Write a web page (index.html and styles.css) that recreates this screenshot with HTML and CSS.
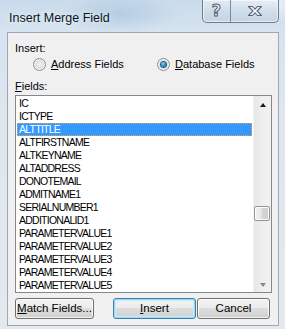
FILE: index.html
```html
<!DOCTYPE html>
<html>
<head>
<meta charset="utf-8">
<link rel="stylesheet" href="styles.css">
</head>
<body>
<div class="window">
  <div class="titlebar">
    <span class="title">Insert Merge Field</span>
    <div class="caption-btns">
      <div class="cbtn help">?</div>
      <div class="cbtn close">
        <svg width="16" height="12" viewBox="0 0 16 12">
          <path d="M1.5 1.5 H5.5 L8 4.2 L10.5 1.5 H14.5 L10 6 L14.5 10.5 H10.5 L8 7.8 L5.5 10.5 H1.5 L6 6 Z" fill="#f7f9fb" stroke="#5b6775" stroke-width="1.1" stroke-linejoin="round"/>
        </svg>
      </div>
    </div>
  </div>
  <div class="frame-body">
    <div class="client">
      <div class="lbl first">Insert:</div>
      <div class="radios">
        <label class="opt opt-address"><span class="radio"></span><span><u>A</u>ddress Fields</span></label>
        <label class="opt"><span class="radio checked"></span><span><u>D</u>atabase Fields</span></label>
      </div>
      <div class="lbl fields"><u>F</u>ields:</div>
      <div class="listbox">
        <ul class="items">
          <li>IC</li>
          <li>ICTYPE</li>
          <li class="sel">ALTTITLE</li>
          <li>ALTFIRSTNAME</li>
          <li>ALTKEYNAME</li>
          <li>ALTADDRESS</li>
          <li>DONOTEMAIL</li>
          <li>ADMITNAME1</li>
          <li>SERIALNUMBER1</li>
          <li>ADDITIONALID1</li>
          <li>PARAMETERVALUE1</li>
          <li>PARAMETERVALUE2</li>
          <li>PARAMETERVALUE3</li>
          <li>PARAMETERVALUE4</li>
          <li>PARAMETERVALUE5</li>
        </ul>
        <div class="vscroll">
          <div class="sbtn"><span class="arrow up"></span></div>
          <div class="track"><div class="thumb"></div></div>
          <div class="sbtn"><span class="arrow down"></span></div>
        </div>
      </div>
      <div class="buttons">
        <div class="btn match"><u>M</u>atch Fields...</div>
        <div class="btn insert default"><u>I</u>nsert</div>
        <div class="btn cancel">Cancel</div>
      </div>
    </div>
  </div>
</div>
</body>
</html>
```

FILE: styles.css
```css
html, body {
  margin: 0;
  padding: 0;
}
body {
  background: #dce5ee;
  font-family: "Liberation Sans", Arial, sans-serif;
  color: #000;
}
.window {
  width: 285px;
  height: 329px;
  display: flex;
  flex-direction: column;
  background:
    radial-gradient(ellipse 60px 20px at 120px 14px, rgba(150,185,215,0.45), rgba(150,185,215,0) 100%),
    radial-gradient(ellipse 40px 18px at 270px 4px, rgba(255,255,255,0.7), rgba(255,255,255,0) 100%),
    linear-gradient(180deg, #cadbeb 0px, #d6e3f0 32px, #dfe6ee 120px, #e4e9ee 329px);
  overflow: hidden;
}
.titlebar {
  height: 32px;
  flex: none;
  display: flex;
  align-items: flex-start;
}
.title {
  font-size: 12.5px;
  line-height: 15px;
  padding: 11px 0 0 9px;
  color: #0b1622;
  text-shadow: 0 0 6px rgba(255,255,255,0.9);
}
.caption-btns {
  margin-left: auto;
  margin-right: 6px;
  display: flex;
  height: 23px;
  border: 1px solid #6e7d8e;
  border-top: none;
  border-radius: 0 0 5px 5px;
  overflow: hidden;
  box-sizing: border-box;
  background: linear-gradient(180deg, rgba(230,238,246,0.85) 0%, rgba(206,220,234,0.85) 50%, rgba(196,212,228,0.9) 100%);
  box-shadow: inset 0 0 0 1px rgba(255,255,255,0.55);
}
.cbtn {
  display: flex;
  align-items: center;
  justify-content: center;
  height: 100%;
}
.help {
  width: 28px;
  border-right: 1px solid #7d8b9b;
  font-family: "DejaVu Sans", sans-serif;
  font-weight: bold;
  font-size: 16px;
  color: #f3f6f9;
  -webkit-text-stroke: 1px #56626f;
  padding-bottom: 1px;
  box-sizing: border-box;
}
.close {
  width: 47px;
}
.close svg {
  display: block;
}
.frame-body {
  flex: 1;
  padding: 0 6px 0 7px;
}
.client {
  box-sizing: border-box;
  width: 272px;
  height: 294px;
  border: 1px solid #9ea8b4;
  background: #f0f0f0;
  padding: 8px 6px 0 7px;
  font-size: 11px;
}
.lbl {
  line-height: 15px;
  height: 15px;
}
.fields {
  margin-top: 7px;
}
.radios {
  margin-top: 1px;
  height: 15px;
  display: flex;
  align-items: center;
  padding-left: 18px;
}
.opt {
  display: flex;
  align-items: center;
  line-height: 15px;
}
.opt-address {
  width: 124px;
}
.radio {
  width: 13px;
  height: 13px;
  box-sizing: border-box;
  border-radius: 50%;
  border: 1px solid #8e8f8f;
  background: radial-gradient(circle at 50% 50%, #f4f4f4 0, #dcdcdc 55%, #c8c8c8 100%);
  box-shadow: inset 0 0 0 1px #f6f6f6;
  margin-right: 5px;
  flex: none;
  display: flex;
  align-items: center;
  justify-content: center;
}
.radio.checked::after {
  content: "";
  width: 5px;
  height: 5px;
  border-radius: 50%;
  background: radial-gradient(circle at 40% 35%, #8fd6ff 0, #2a8fd0 45%, #0d4f86 100%);
  box-shadow: 0 0 0 1px #1f5f8f;
}
.listbox {
  margin-top: 1px;
  width: 257px;
  height: 198px;
  box-sizing: border-box;
  border: 1px solid #828790;
  background: #fff;
  display: flex;
}
.items {
  list-style: none;
  margin: 0;
  padding: 1px 1px 0 1px;
  flex: 1;
  min-width: 0;
}
.items li {
  height: 13px;
  line-height: 13px;
  padding-left: 2px;
  font-size: 10.5px;
  letter-spacing: -0.75px;
  white-space: nowrap;
  color: #000;
}
.items li.sel {
  background: #3399ff;
  color: #fff;
  outline: 1px dotted #f0a040;
  outline-offset: -1px;
}
.vscroll {
  width: 17px;
  flex: none;
  display: flex;
  flex-direction: column;
  background: linear-gradient(90deg, #e6e6e6 0, #eeeeee 40%, #f2f2f2 100%);
  border-left: 1px solid #f4f4f4;
}
.sbtn {
  height: 17px;
  flex: none;
  display: flex;
  align-items: center;
  justify-content: center;
}
.arrow {
  width: 0;
  height: 0;
  border-left: 3.5px solid transparent;
  border-right: 3.5px solid transparent;
}
.arrow.up {
  border-bottom: 4px solid #1a1a1a;
}
.arrow.down {
  border-top: 4px solid #8a8a8a;
  margin-top: 2px;
}
.track {
  flex: 1;
}
.thumb {
  margin: 93px 1px 0 0;
  height: 15px;
  box-sizing: border-box;
  border: 1px solid #959595;
  border-radius: 2px;
  background: linear-gradient(90deg, #f2f2f2 0, #e6e6e6 45%, #d4d4d4 55%, #cfcfcf 100%);
  box-shadow: inset 0 0 0 1px #fbfbfb;
}
.buttons {
  margin-top: 5px;
  display: flex;
  height: 21px;
}
.btn {
  box-sizing: border-box;
  height: 21px;
  border: 1px solid #707070;
  border-radius: 3px;
  background: linear-gradient(180deg, #f2f2f2 0, #ebebeb 50%, #dddddd 50%, #cfcfcf 100%);
  box-shadow: inset 0 0 0 1px rgba(255,255,255,0.75);
  display: flex;
  align-items: center;
  justify-content: center;
  font-size: 11.5px;
  line-height: 15px;
}
.match {
  width: 79px;
}
.insert {
  width: 83px;
  margin-left: 19px;
}
.cancel {
  width: 73px;
  margin-left: 1px;
}
.btn.default {
  border-color: #3c7fb1;
  box-shadow: inset 0 0 0 1px #9fd8f6, inset 0 0 0 2px #c8ebfa;
}
```
